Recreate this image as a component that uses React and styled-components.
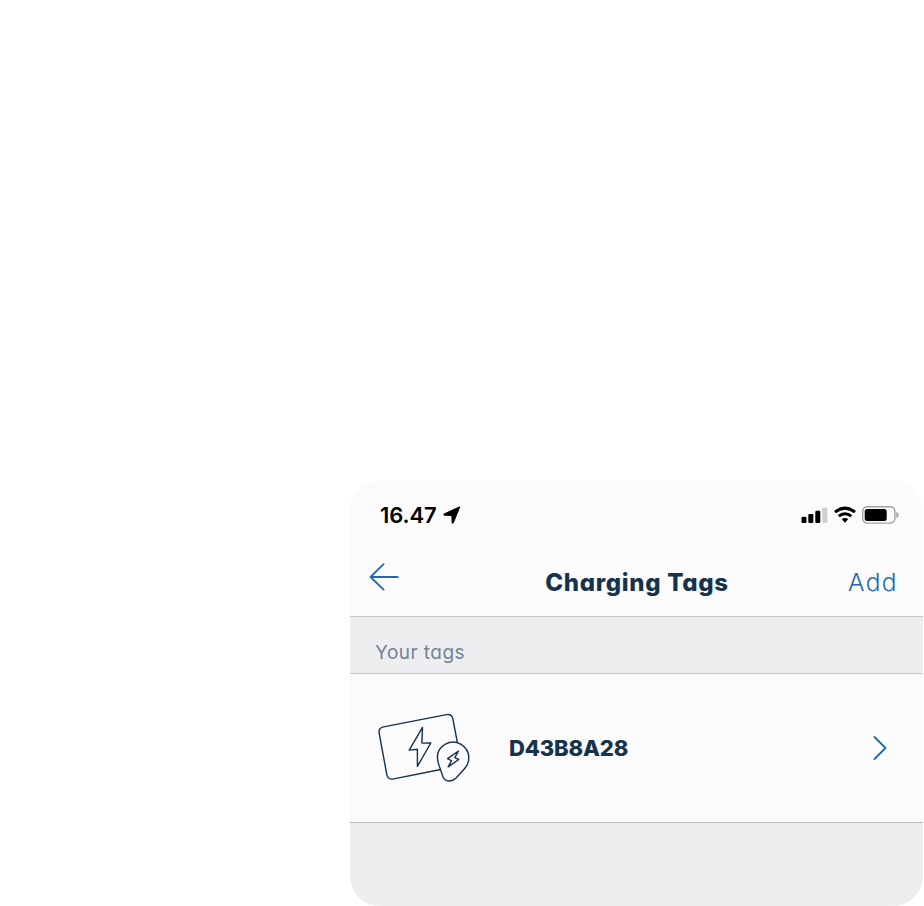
import React from "react";
import styled, { createGlobalStyle } from "styled-components";

const GlobalStyle = createGlobalStyle`
  * { box-sizing: border-box; }
  body { margin: 0; background: #fff; font-family: Inter, "Liberation Sans", sans-serif; font-feature-settings: "cv11"; }
`;

const Page = styled.main`
  width: 924px;
  height: 906px;
  padding: 481px 1px 0 350px;
  overflow: hidden;
`;

const Phone = styled.section`
  height: 425px;
  display: flex;
  flex-direction: column;
  background: #edeef0;
  border-radius: 30px;
  overflow: hidden;
`;

const StatusBar = styled.div`
  height: 62px;
  padding: 6px 24px 0 30px;
  display: flex;
  align-items: center;
  justify-content: space-between;
  background: #fbfbfb;
`;

const Group = styled.div`
  display: flex;
  align-items: center;
  gap: ${(p) => p.$gap}px;
`;

const Time = styled.span`
  width: 58px;
  font-size: 22px;
  line-height: 26px;
  font-weight: 600;
  letter-spacing: -0.1px;
  white-space: nowrap;
  color: #000;
`;

const NavBar = styled.header`
  height: 74px;
  padding: 1px 25px 0 19px;
  display: grid;
  grid-template-columns: 100px 1fr 100px;
  align-items: center;
  background: #fbfbfb;
  border-bottom: 1px solid #c3c5c9;
`;

const Back = styled.button`
  display: flex;
  padding: 0 0 7px;
  border: 0;
  background: none;
`;

const Title = styled.h1`
  margin: 0;
  padding: 6px 0 0 7px;
  font-size: 24px;
  line-height: 30px;
  font-weight: 800;
  letter-spacing: 0.68px;
  text-align: center;
  white-space: nowrap;
  color: #17324d;
`;

const Add = styled.button`
  padding: 3px 0 0;
  border: 0;
  background: none;
  font: 300 24.5px/30px Inter, sans-serif;
  letter-spacing: 1.4px;
  text-align: right;
  color: #2268ad;
`;

const SectionHeader = styled.h2`
  height: 57px;
  margin: 0;
  padding: 23px 25px 0;
  border-bottom: 1px solid #c3c5c9;
  font-size: 19px;
  line-height: 26px;
  font-weight: 400;
  letter-spacing: 0.45px;
  color: #748494;
`;

const TagRow = styled.div`
  height: 149px;
  padding: 0 36px 0 26px;
  display: flex;
  align-items: center;
  background: #fbfbfb;
  border-bottom: 1px solid #b9bcc0;
`;

const TagName = styled.strong`
  flex: 1;
  margin-left: 37px;
  font-size: 22px;
  line-height: 28px;
  font-weight: 800;
  letter-spacing: -0.15px;
  color: #17324d;
`;

const LocationIcon = () => (
  <svg width="18" height="18" viewBox="0 0 18 18">
    <path d="M16.6 1 L10.4 16.3 Q9.5 18 9.2 15.8 L8.9 9.9 Q8.8 9.4 8.3 9.3 L2 9.1 Q0 8.7 1.8 7.7 Z" stroke="#000" strokeWidth="1.2" strokeLinejoin="round" />
  </svg>
);

const SignalIcon = () => (
  <svg width="27" height="18" viewBox="0 0 27 18">
    <rect x="0.5" y="10.8" width="5" height="6.2" rx="1.2" />
    <rect x="7.3" y="8" width="5" height="9" rx="1.2" />
    <rect x="14.3" y="4.8" width="5" height="12.2" rx="1.2" />
    <rect x="21.3" y="1.5" width="5" height="15.5" rx="1.2" fill="#cfcfcf" />
  </svg>
);

const WifiIcon = () => (
  <svg width="24" height="18" viewBox="0 0 24 18" fill="none" stroke="#000" strokeWidth="3">
    <path d="M2 6.2 Q12 -1.9 22 6.2" />
    <path d="M5.7 10.2 Q12 5.2 18.3 10.2" />
    <path d="M8.7 13.1 Q12 10.8 15.3 13.1 L12 16.8Z" fill="#000" stroke="none" />
  </svg>
);

const BatteryIcon = () => (
  <svg width="37" height="18" viewBox="0 0 37 18">
    <rect x="0.7" y="0.8" width="32.2" height="16.3" rx="4.5" fill="none" stroke="#a1a1a1" strokeWidth="1.4" />
    <rect x="2.7" y="3" width="22" height="12" rx="2.5" />
    <path d="M34.3 6 Q36.7 6.6 36.7 9 Q36.7 11.4 34.3 12Z" fill="#a1a1a1" />
  </svg>
);

const BackIcon = () => (
  <svg width="30" height="28" viewBox="0 0 30 28" fill="none" stroke="#2268ad" strokeWidth="1.8" strokeLinecap="round" strokeLinejoin="round">
    <path d="M14.6 1.2 L1.5 14 L14.6 26.7 M1.5 14 H28.7" />
  </svg>
);

const ChevronIcon = () => (
  <svg width="16" height="26" viewBox="0 0 16 26" fill="none" stroke="#2268ad" strokeWidth="1.8" strokeLinecap="round" strokeLinejoin="round">
    <path d="M3.5 2 L14.5 13 L3.5 24" />
  </svg>
);

const TagIcon = () => (
  <svg width="96" height="72" viewBox="0 0 96 72" fill="none" stroke="#17324d" strokeWidth="1.4" strokeLinejoin="round">
    <path d="M66 57.2 L17.8 66.9 Q12 68 10.8 62.6 L3.2 21.3 Q2.2 16 7.5 14.9 L70.5 2.6 Q75.8 1.6 76.9 7 L81.4 30.9" />
    <path d="M46.5 15.4 L33.2 38.1 L41.4 37.3 L41.4 54.4 L54.8 31 L45.9 31.1 Z" />
    <path fill="#fbfbfb" d="M67 65 L62.8 52.6 C59.8 43.7 62 36.2 69.5 32.1 C80 26.5 92.8 34 92.8 46 C92.8 50 91.5 53.3 88.7 56.5 L79.8 66.3 C75.8 70.5 69 69.6 67 65Z" />
    <path d="M82.5 39 L71.6 46.6 L75.5 48.6 L72.2 54.9 L82.8 47.5 L78.8 45.6 Z" />
  </svg>
);

export default function App() {
  return (
    <>
      <GlobalStyle />
      <Page>
        <Phone>
          <StatusBar>
            <Group $gap={5}>
              <Time>16.47</Time>
              <LocationIcon />
            </Group>
            <Group $gap={5}>
              <SignalIcon />
              <WifiIcon />
              <BatteryIcon />
            </Group>
          </StatusBar>
          <NavBar>
            <Back aria-label="Back"><BackIcon /></Back>
            <Title>Charging Tags</Title>
            <Add>Add</Add>
          </NavBar>
          <SectionHeader>Your tags</SectionHeader>
          <TagRow>
            <TagIcon />
            <TagName>D43B8A28</TagName>
            <ChevronIcon />
          </TagRow>
        </Phone>
      </Page>
    </>
  );
}
